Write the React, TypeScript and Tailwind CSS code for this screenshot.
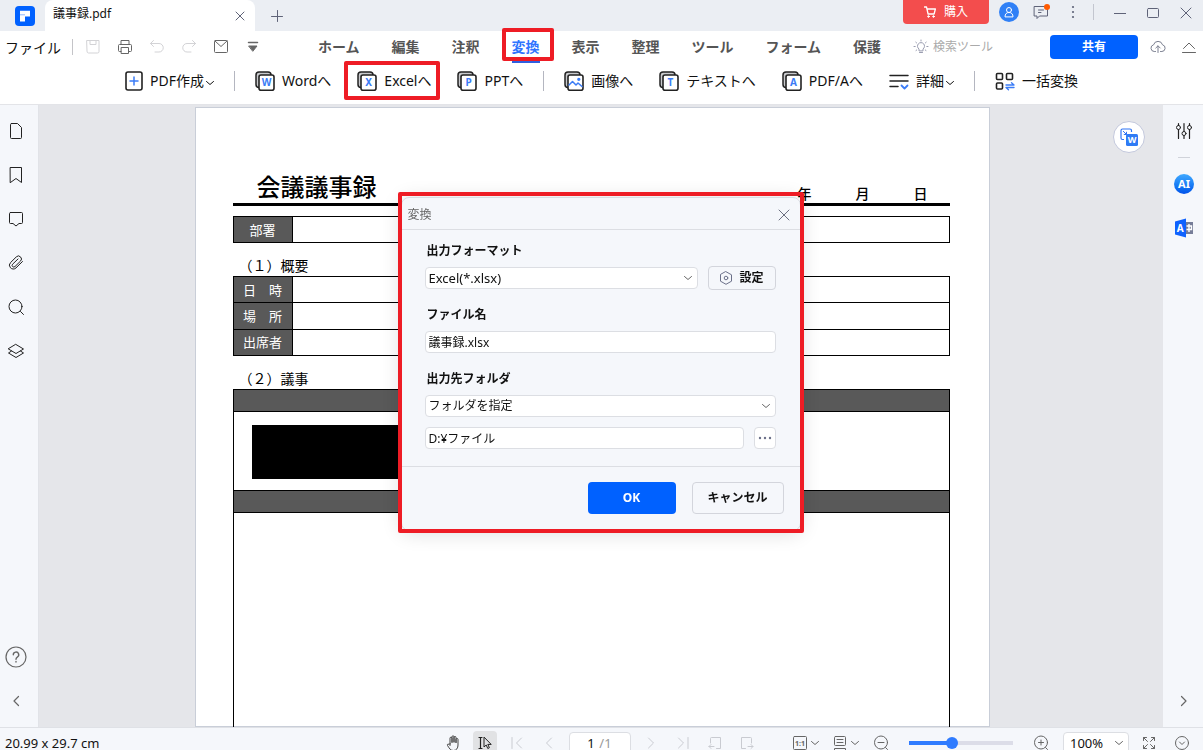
import type { ReactNode } from "react";

const fontUi = "font-['Noto_Sans','Noto_Sans_CJK_JP',sans-serif]";
const fontDoc = "font-['Noto_Sans_CJK_JP',sans-serif]";

type IconProps = {
  w?: number;
  h?: number;
  className?: string;
  children: ReactNode;
};

function Icon({ w = 16, h = 16, className = "", children }: IconProps) {
  return (
    <svg
      width={w}
      height={h}
      viewBox={`0 0 ${w} ${h}`}
      fill="none"
      stroke="currentColor"
      strokeWidth="1"
      strokeLinecap="round"
      strokeLinejoin="round"
      aria-hidden="true"
      className={`shrink-0 ${className}`}
    >
      {children}
    </svg>
  );
}

function Chevron({ className = "" }: { className?: string }) {
  return (
    <Icon w={8} h={6} className={className}>
      <path d="M.5 1.5 4 4.5 7.5 1.5" />
    </Icon>
  );
}

function CloseIcon({ size = 12 }: { size?: number }) {
  return (
    <Icon w={size} h={size}>
      <path d={`M1 1 ${size - 1} ${size - 1} M${size - 1} 1 1 ${size - 1}`} />
    </Icon>
  );
}

/* Two stacked sheets, with the target format on the front one */
function SheetIcon({ letter }: { letter?: string }) {
  return (
    <Icon w={20} h={20} className="text-[#222]">
      <rect x="1" y="1" width="15" height="15.5" rx="3" fill="#c8c9cc" strokeWidth="1.5" />
      <rect x="4" y="4" width="15" height="15.2" rx="2" fill="#fff" strokeWidth="1.6" />
      {letter ? (
        <text
          x="11.5"
          y="15.3"
          textAnchor="middle"
          fontSize="10"
          fontWeight="700"
          fontFamily="Noto Sans"
          fill="#3b7cf6"
          stroke="none"
        >
          {letter}
        </text>
      ) : (
        <g stroke="#3b7cf6" strokeWidth="1.5">
          <path d="M5 14 8.5 10.5 12 14 14 12 18 15.5" />
          <circle cx="14.8" cy="8.3" r=".9" fill="#3b7cf6" />
        </g>
      )}
    </Icon>
  );
}

function TitleBar() {
  return (
    <div className="flex h-[31px] shrink-0 bg-[#ebeef3] text-[#5f6378]">
      <div className="flex w-[45px] items-center justify-center pl-1">
        <svg width="20" height="20" viewBox="0 0 20 20" aria-hidden="true">
          <rect width="20" height="20" rx="4" fill="#0061ff" />
          <path d="M5 4.800h10v5.700h-5V15.500H5z" fill="#fff" />
          <path d="M5 8.300h5v1H5z" fill="#8fb8ff" />
        </svg>
      </div>
      <div className="flex w-[210px] items-center justify-between rounded-t-lg bg-white pr-2.5 pl-2">
        <span className="pb-1 text-[12px] text-[#111]">議事録.pdf</span>
        <button type="button" aria-label="タブを閉じる">
          <CloseIcon size={10} />
        </button>
      </div>
      <button type="button" aria-label="新しいタブ" className="px-4">
        <Icon w={12} h={12}>
          <path d="M6.500.5v11M.5 6.500h11" />
        </Icon>
      </button>
      <div className="ml-auto flex h-6 items-center pr-[11px]">
        <button
          type="button"
          className="flex h-6 w-[86px] items-center justify-center gap-2 rounded-b bg-[#f34d4d] text-[12px] text-white"
        >
          <Icon w={12} h={12}>
            <path d="M.5 1h2l1.600 7h6l1.300-5H3" strokeWidth="1.300" />
            <circle cx="4.500" cy="10.500" r=".8" fill="#fff" />
            <circle cx="9.500" cy="10.500" r=".8" fill="#fff" />
          </Icon>
          購入
        </button>
        <button
          type="button"
          aria-label="アカウント"
          className="ml-2.5 flex size-5 items-center justify-center rounded-full bg-[#3080f6] text-white"
        >
          <Icon w={12} h={12}>
            <circle cx="6" cy="4" r="2.500" />
            <path d="M2 10.500c0-2.500 1.500-4 4-4s4 1.500 4 4z" />
          </Icon>
        </button>
        <button type="button" aria-label="メッセージ" className="relative ml-3.5">
          <Icon w={16} h={16}>
            <path d="M1.500 2.500h13v9.500h-8l-2.500 2.500v-2.500h-2.500zM5.500 6h5M5.500 8.500h2.500" />
          </Icon>
          <span className="absolute top-0 -right-px size-1.5 rounded-full bg-[#ff5a00]" />
        </button>
        <button type="button" aria-label="その他" className="ml-5">
          <Icon w={8} h={14}>
            <g fill="currentColor" stroke="none">
              <circle cx="4" cy="2" r="1.100" />
              <circle cx="4" cy="7" r="1.100" />
              <circle cx="4" cy="12" r="1.100" />
            </g>
          </Icon>
        </button>
        <span className="ml-4 h-4 w-px bg-[#c3c6cf]" />
        <div className="ml-5 flex items-center gap-5 pt-0.5">
          <button type="button" aria-label="最小化">
            <Icon w={12} h={12}>
              <path d="M0 6.500h12" />
            </Icon>
          </button>
          <button type="button" aria-label="最大化">
            <Icon w={14} h={12}>
              <rect x="1.500" y="1.500" width="11" height="9" rx="1" />
            </Icon>
          </button>
          <button type="button" aria-label="閉じる">
            <CloseIcon />
          </button>
        </div>
      </div>
    </div>
  );
}

const quickTools = [
  {
    label: "保存",
    muted: true,
    icon: <path d="M2 1.500h12v11a1.500 1.500 0 0 1-1.500 1.500h-9A1.500 1.500 0 0 1 2 12.500zM5 1.500v4h6v-4" />,
  },
  {
    label: "印刷",
    icon: (
      <>
        <path d="M4 5.500v-4h8v4M4 12.500H2.500a1 1 0 0 1-1-1v-5a1 1 0 0 1 1-1h11a1 1 0 0 1 1 1v5a1 1 0 0 1-1 1H12" />
        <rect x="4.500" y="8.500" width="7" height="6" />
      </>
    ),
  },
  { label: "元に戻す", muted: true, icon: <path d="M4.500 1.500 1.500 4.500 4.500 7.500M1.500 4.500h8.500a4.200 4.200 0 0 1 0 8.500H6" /> },
  { label: "やり直し", muted: true, icon: <path d="M11.500 1.500 14.500 4.500 11.500 7.500M14.500 4.500H6a4.200 4.200 0 0 0 0 8.500h4" /> },
  {
    label: "メール",
    icon: (
      <>
        <rect x="1.500" y="1.500" width="13" height="12" rx="1" />
        <path d="M2 2 8 7.500 14 2" />
      </>
    ),
  },
  {
    label: "カスタマイズ",
    icon: (
      <>
        <path d="M3.500 3.500h9" strokeWidth="1.500" />
        <path d="M4 7h8L8 12z" fill="currentColor" />
      </>
    ),
  },
];

const menus = ["ホーム", "編集", "注釈", "変換", "表示", "整理", "ツール", "フォーム", "保護"];

function MenuBar() {
  return (
    <div className="grid h-8 grid-cols-[1fr_auto_1fr] items-center">
      <div className="flex items-center pl-[5px]">
        <button type="button" className="text-[14px] text-[#111]">ファイル</button>
        <span className="mr-1 ml-[11px] h-4 w-px bg-[#c4c4c8]" />
        {quickTools.map((t) => (
          <button
            key={t.label}
            type="button"
            aria-label={t.label}
            className={`flex w-8 justify-center ${t.muted ? "text-[#d3d3d6]" : "text-[#666]"}`}
          >
            <Icon>{t.icon}</Icon>
          </button>
        ))}
      </div>
      <nav className="flex h-8 gap-8 pr-1 text-[14px] font-bold text-[#555]">
        {menus.map((m) =>
          m === "変換" ? (
            <button key={m} type="button" className="relative pb-0.5 text-[#2f74ff]">
              {m}
              <span className="absolute inset-x-0 bottom-0 h-0.5 bg-[#2f5fe0]" />
              <span className="absolute -right-3.5 bottom-0.5 -left-2.5 -top-[3px] rounded-xs border-4 border-[#ee1c25]" />
            </button>
          ) : (
            <button key={m} type="button" className="pb-0.5">{m}</button>
          )
        )}
      </nav>
      <div className="flex items-center pr-[7px] pl-7 text-[#7b7f90]">
        <button type="button" className="flex items-center gap-1 text-[12px] text-[#aaa]">
          <Icon className="text-[#9a9db0]">
            <path d="M6 11.500v-1.500a3.500 3.500 0 1 1 4 0v1.500zM6.500 13.500h3M8 1v1M2.800 3.200l.8.7M13.200 3.200l-.8.7M1 7.500h1.200M13.800 7.500H15M3 11.500l.7-.5M13 11.500l-.7-.5" />
          </Icon>
          検索ツール
        </button>
        <button
          type="button"
          className="ml-auto h-6 w-[88px] rounded bg-[#0061ff] text-[12px] font-bold text-white"
        >
          共有
        </button>
        <button type="button" aria-label="クラウドへアップロード" className="ml-3">
          <Icon w={16} h={16}>
            <path d="M5.500 12.500H4.200a3.400 3.400 0 0 1-.6-6.700 4.600 4.600 0 0 1 8.900 0 3.400 3.400 0 0 1-.6 6.700h-1.400M8 13.500V7M5.800 9 8 6.800 10.200 9" />
          </Icon>
        </button>
        <button type="button" aria-label="リボンを折りたたむ" className="ml-4 text-[#666]">
          <Icon w={14} h={14}>
            <path d="M1.500 8.500 7 3l5.500 5.500M.5 12.500h13" />
          </Icon>
        </button>
      </div>
    </div>
  );
}

function Tool({ icon, label, menu, marked }: { icon: ReactNode; label: string; menu?: boolean; marked?: boolean }) {
  return (
    <button type="button" className="relative flex h-9 items-center px-[13px] whitespace-nowrap">
      {icon}
      <span className="ml-[7px] pb-0.5">{label}</span>
      {menu && <Chevron className="mt-1 ml-0.5" />}
      {marked && <span className="absolute -top-0.5 right-1 -bottom-px left-0 rounded-xs border-4 border-[#ee1c25]" />}
    </button>
  );
}

function ToolSeparator() {
  return <span className="mx-[7px] h-5 w-px bg-[#b4b6c0]" />;
}

function ToolBar() {
  return (
    <div className="flex h-9 items-center justify-center text-[14px] text-[#111]">
      <Tool
        menu
        label="PDF作成"
        icon={
          <Icon w={18} h={20} className="text-[#222]">
            <rect x="1" y="1" width="16" height="18" rx="2" strokeWidth="1.600" />
            <path d="M9 6v8M5 10h8" stroke="#3b7cf6" strokeWidth="1.500" />
          </Icon>
        }
      />
      <ToolSeparator />
      <Tool icon={<SheetIcon letter="W" />} label="Wordへ" />
      <Tool icon={<SheetIcon letter="X" />} label="Excelへ" marked />
      <Tool icon={<SheetIcon letter="P" />} label="PPTへ" />
      <ToolSeparator />
      <Tool icon={<SheetIcon />} label="画像へ" />
      <Tool icon={<SheetIcon letter="T" />} label="テキストへ" />
      <Tool icon={<SheetIcon letter="A" />} label="PDF/Aへ" />
      <Tool
        menu
        label="詳細"
        icon={
          <Icon w={20} h={20} className="text-[#222]">
            <path d="M1 4.500h18M1 10h18M1 15.500h8" strokeWidth="1.500" />
            <path d="M12.500 14.500 15.500 17.500 18.500 14.500" stroke="#3b7cf6" strokeWidth="1.800" />
          </Icon>
        }
      />
      <ToolSeparator />
      <Tool
        label="一括変換"
        icon={
          <Icon w={20} h={20} className="text-[#222]">
            <g strokeWidth="1.600">
              <rect x="1.500" y="2.500" width="6" height="6" rx="1" />
              <rect x="11.500" y="2.500" width="6" height="6" rx="1" />
              <rect x="1.500" y="12" width="6" height="6" rx="1" />
            </g>
            <path d="M11 14h8l-2.500-2.200M19 16.500h-8l2.500 2.200" stroke="#3b7cf6" strokeWidth="1.400" />
          </Icon>
        }
      />
    </div>
  );
}

const panels = [
  { label: "サムネイル", icon: <path d="M3.500.5h6l4 4v10a1 1 0 0 1-1 1h-9a1 1 0 0 1-1-1v-13a1 1 0 0 1 1-1z" /> },
  { label: "しおり", icon: <path d="M2.500.5h11v15L8 11.500 2.500 15.500z" /> },
  { label: "注釈", icon: <path d="M2.500 1.500h11a1 1 0 0 1 1 1v9a1 1 0 0 1-1 1H11l-3 2.500-3-2.500H2.500a1 1 0 0 1-1-1v-9a1 1 0 0 1 1-1z" /> },
  {
    label: "添付ファイル",
    icon: <path d="M14.500 7 8 13.400a3.800 3.800 0 0 1-5.600-.2 3.800 3.800 0 0 1 .2-5.200l5.700-5.600a2.900 2.900 0 0 1 4.200 0 2.900 2.900 0 0 1 0 4.200L7 12a1.600 1.600 0 0 1-2.400-2.300L10 4.500" transform="translate(0 -.5)" />,
  },
  {
    label: "検索",
    icon: (
      <>
        <circle cx="7.500" cy="7.500" r="6.500" />
        <path d="m12.500 12.500 3 3" />
      </>
    ),
  },
  {
    label: "レイヤー",
    icon: <path d="M8 1.500 15.500 6 8 10.500.5 6zM3.500 8 .5 10 8 14.500 15.500 10l-3-2" />,
  },
];

function LeftRail() {
  return (
    <aside className="flex w-[39px] shrink-0 flex-col border-r border-[#e1e3e8] bg-[#f5f7fb] py-1 text-[#222]">
      {panels.map((p) => (
        <button key={p.label} type="button" aria-label={p.label} className="flex h-11 w-8 items-center justify-center">
          <Icon>{p.icon}</Icon>
        </button>
      ))}
      <button type="button" aria-label="ヘルプ" className="mt-auto flex h-11 w-8 items-center justify-center text-[#666]">
        <Icon w={22} h={22}>
          <circle cx="11" cy="11" r="10" strokeWidth="1.200" />
          <path d="M8.300 8.800a2.700 2.700 0 1 1 4 2.300c-.9.5-1.300 1-1.300 2.200M11 15.500v.6" strokeWidth="1.400" />
        </Icon>
      </button>
      <button type="button" aria-label="パネルを開く" className="flex h-11 w-8 items-center justify-center text-[#666]">
        <Icon w={8} h={12}>
          <path d="M6.500 1.500 2 6l4.500 4.500" strokeWidth="1.200" />
        </Icon>
      </button>
    </aside>
  );
}

function RightRail() {
  return (
    <aside className="flex w-10 shrink-0 flex-col items-center bg-[#f5f7fb] py-1 pl-0.5 text-[#222]">
      <button type="button" aria-label="プロパティ" className="flex h-11 items-center">
        <Icon w={18} h={18}>
          <path d="M3.500 1.500v2M3.500 7.500v9M9 1.500v8M9 13.500v3M14.500 1.500v2M14.500 7.500v9" strokeWidth="1.200" />
          <circle cx="3.500" cy="5.500" r="2" />
          <circle cx="9" cy="11.500" r="2" />
          <circle cx="14.500" cy="5.500" r="2" />
        </Icon>
      </button>
      <span className="mt-1 mb-1 h-px w-3 bg-[#d0d3da]" />
      <button type="button" aria-label="AIアシスタント" className="flex h-11 items-center">
        <span className="flex size-5 items-center justify-center rounded-full bg-linear-to-b from-[#3fa9ff] to-[#0552ea] text-[11px] font-bold text-white">
          AI
        </span>
      </button>
      <button type="button" aria-label="翻訳" className="flex h-11 items-center">
        <svg width="20" height="20" viewBox="0 0 20 20" aria-hidden="true">
          <rect x="9" y="4" width="10" height="12" fill="#767d98" />
          <path d="M1 3.500 12 .5v19L1 16.500z" fill="#0f62fe" />
          <path d="M12.500 8h5v3.500h-5M15 6v8" fill="none" stroke="#fff" strokeWidth="1.400" />
          <text x="6.300" y="13.800" textAnchor="middle" fontSize="10" fontWeight="700" fontFamily="Noto Sans" fill="#fff">
            A
          </text>
        </svg>
      </button>
      <button type="button" aria-label="サイドバーを開く" className="mt-auto flex h-11 items-center text-[#666]">
        <Icon w={8} h={12}>
          <path d="M1.500 1.500 6 6l-4.500 4.500" strokeWidth="1.200" />
        </Icon>
      </button>
    </aside>
  );
}

function FormRow({ label }: { label: string }) {
  return (
    <tr>
      <th scope="row" className="w-[59px] border border-black bg-[#595959] p-0 text-[13px] leading-4 font-normal text-white">
        {label}
      </th>
      <td className="border border-black p-0" />
    </tr>
  );
}

function SectionTitle({ children }: { children: ReactNode }) {
  return <h2 className="flex h-[33px] items-end pb-[3px] pl-1.5 text-[14px] leading-4">{children}</h2>;
}

function MinutesPage() {
  return (
    <article
      className={`w-full max-w-[795px] border border-[#c9ced8] bg-white pt-[63px] pr-[39px] pl-[37px] text-black ${fontDoc}`}
    >
      <header className="flex justify-between border-b-3 border-black pr-[22px] pb-0.5 pl-6">
        <h1 className="text-[24px] leading-[30px] font-medium">会議議事録</h1>
        <p className="flex gap-11 self-end text-[14px] leading-4 font-medium">
          <span>年</span>
          <span>月</span>
          <span>日</span>
        </p>
      </header>
      <table className="mt-2.5 h-[27px] w-full border-collapse">
        <tbody>
          <FormRow label="部署" />
        </tbody>
      </table>
      <SectionTitle>（１）概要</SectionTitle>
      <table className="h-20 w-full border-collapse">
        <tbody>
          <FormRow label="日　時" />
          <FormRow label="場　所" />
          <FormRow label="出席者" />
        </tbody>
      </table>
      <SectionTitle>（２）議事</SectionTitle>
      <div className="border border-black">
        <div className="h-[22px] border-b border-black bg-[#595959]" />
        <div className="h-[78px] px-[18px] pt-[13px]">
          <div className="h-[54px] w-1/2 bg-black" />
        </div>
        <div className="h-[23px] border-y border-black bg-[#595959]" />
        <div className="h-[500px]" />
      </div>
    </article>
  );
}

function Workspace() {
  return (
    <main className="relative flex flex-1 justify-center overflow-hidden bg-[#e5e6ea] pt-0.5 pr-[18px]">
      <MinutesPage />
      <button
        type="button"
        aria-label="Wordに変換"
        className="absolute top-4 right-[18px] flex size-8 items-center justify-center rounded-full border border-[#c3c8dc] bg-white"
      >
        <svg width="18" height="18" viewBox="0 0 18 18" aria-hidden="true">
          <path d="M4 11.500H2.500A1.500 1.500 0 0 1 1 10V2.500A1.500 1.500 0 0 1 2.500 1H10a1.500 1.500 0 0 1 1.500 1.500V4" fill="none" stroke="#2f74f5" strokeWidth="1.200" />
          <path d="M3 3l3.500 3.500M6.500 3.800v2.700H3.800" fill="none" stroke="#2f74f5" />
          <rect x="6" y="6" width="12" height="12" rx="1.500" fill="#2f7bf5" />
          <text x="12" y="15.300" textAnchor="middle" fontSize="9" fontWeight="700" fontFamily="Noto Sans" fill="#fff">
            W
          </text>
        </svg>
      </button>
    </main>
  );
}

const field =
  "h-[22px] w-full min-w-0 appearance-none rounded border border-[#dcdee3] bg-white px-[3px] leading-4 text-[#111] outline-none";

function SelectField({ id, value, big }: { id: string; value: string; big?: boolean }) {
  return (
    <div className="relative min-w-0 flex-1">
      <select id={id} className={`${field} block ${big ? "text-[13px]" : "text-[12px]"}`}>
        <option>{value}</option>
      </select>
      <Chevron className="pointer-events-none absolute top-2 right-1.5 text-[#666]" />
    </div>
  );
}

function FieldLabel({ htmlFor, children }: { htmlFor: string; children: ReactNode }) {
  return (
    <label htmlFor={htmlFor} className="h-4 pl-0.5 leading-[18px] font-bold">
      {children}
    </label>
  );
}

function ConvertDialog() {
  return (
    <div className="fixed inset-0 flex items-center justify-center pr-0.5 pb-[22px]">
      <div
        role="dialog"
        aria-labelledby="convert-title"
        className="relative w-full max-w-[400px] rounded-lg border border-[#d9dce3] bg-[#f5f7fb] text-[12px] text-[#111] shadow-[0_2px_20px_rgba(0,0,0,0.14)]"
      >
        <div className="flex h-8 items-center justify-between border-b border-[#dcdee3] pt-0.5 pr-2.5 pl-1.5">
          <h2 id="convert-title" className="text-[#666]">変換</h2>
          <button type="button" aria-label="ダイアログを閉じる" className="text-[#6b6f80]">
            <CloseIcon />
          </button>
        </div>
        <div className="flex flex-col gap-2 pt-3 pr-6 pb-4 pl-[23px]">
          <FieldLabel htmlFor="format">出力フォーマット</FieldLabel>
          <div className="flex h-6 items-center gap-2.5">
            <SelectField id="format" value="Excel(*.xlsx)" big />
            <button
              type="button"
              className="flex h-6 w-[68px] items-center justify-center gap-1.5 rounded border border-[#d3d5dc] font-bold"
            >
              <Icon w={14} h={14} className="text-[#6b7089]">
                <path d="M7 .7 12.500 3.800v6.400L7 13.300 1.500 10.200V3.800z" />
                <circle cx="7" cy="7" r="1.800" />
              </Icon>
              設定
            </button>
          </div>
          <div className="mt-2 flex">
            <FieldLabel htmlFor="filename">ファイル名</FieldLabel>
          </div>
          <div className="flex h-6 items-center">
            <input id="filename" type="text" defaultValue="議事録.xlsx" className={field} />
          </div>
          <div className="mt-2 flex">
            <FieldLabel htmlFor="folder">出力先フォルダ</FieldLabel>
          </div>
          <div className="flex h-6 items-center">
            <SelectField id="folder" value="フォルダを指定" />
          </div>
          <div className="flex h-6 items-center gap-2.5">
            <input type="text" aria-label="フォルダのパス" defaultValue="D:¥ファイル" className={`${field} text-[12px]`} />
            <button
              type="button"
              aria-label="参照"
              className="flex h-[22px] w-[22px] shrink-0 items-center justify-center rounded border border-[#dcdee3] bg-white text-[#6b7089]"
            >
              <Icon w={14} h={4}>
                <g fill="currentColor" stroke="none">
                  <circle cx="2" cy="2" r="1.200" />
                  <circle cx="7" cy="2" r="1.200" />
                  <circle cx="12" cy="2" r="1.200" />
                </g>
              </Icon>
            </button>
          </div>
        </div>
        <div className="flex justify-end gap-4 border-t border-[#dcdee3] px-4 pt-[15px] pb-4 font-bold">
          <button type="button" className="h-8 w-[88px] rounded bg-[#0061ff] text-white">OK</button>
          <button type="button" className="h-8 w-[92px] rounded border border-[#d3d5dc]">キャンセル</button>
        </div>
        <span className="pointer-events-none absolute -inset-x-1 -top-1.5 -bottom-[3px] rounded-xs border-4 border-[#ee1c25]" />
      </div>
    </div>
  );
}

function StatusButton({ label, active, children }: { label: string; active?: boolean; children: ReactNode }) {
  return (
    <button
      type="button"
      aria-label={label}
      className={`flex size-6 items-center justify-center ${active ? "rounded bg-[#e1e2e4] text-[#222]" : ""}`}
    >
      {children}
    </button>
  );
}

function StatusBar() {
  return (
    <footer className="h-[23px] shrink-0 overflow-hidden border-t border-[#dfe1e6] bg-[#f5f7fb]">
      <div className="grid h-[29px] grid-cols-[1fr_auto_1fr] items-center text-[13px] leading-4 text-[#111]">
        <span className="pl-[5px]">20.99 x 29.7 cm</span>
        <div className="flex items-center gap-2 pr-1 text-[#c9cbd1]">
          <StatusButton label="手のひらツール">
            <Icon w={14} h={16} className="text-[#444]">
              <path d="M4 9V3.200a1 1 0 0 1 2 0V7.500M6 7V1.800a1 1 0 0 1 2 0V7M8 7V2.500a1 1 0 0 1 2 0V7.500M10 7.500V4.500a1 1 0 0 1 2 0V10c0 3-1.500 5.500-4.500 5.500S3.800 14 1.500 10.500c-.6-1 .5-2 1.500-1l1 1V8.500" />
            </Icon>
          </StatusButton>
          <StatusButton label="選択ツール" active>
            <Icon w={14} h={14}>
              <path d="M1 1.500h3M2.500 1.500v11M1 12.500h3" strokeWidth="1.200" />
              <path d="M6 1.500v9.500l2.200-2 1.600 3.500 1.600-.8-1.600-3.300h3z" />
            </Icon>
          </StatusButton>
          <StatusButton label="最初のページ">
            <Icon w={12} h={12}>
              <path d="M1 .5v11M10.500 1 5.500 6l5 5" />
            </Icon>
          </StatusButton>
          <StatusButton label="前のページ">
            <Icon w={12} h={12}>
              <path d="M8.500 1 3.500 6l5 5" />
            </Icon>
          </StatusButton>
          <label className="flex h-[22px] w-[62px] items-center justify-center rounded border border-[#dcdee3] bg-white text-[#999]">
            <input aria-label="ページ" defaultValue="1" className="h-4 w-3 bg-transparent text-[#111] outline-none" />
            /1
          </label>
          <StatusButton label="次のページ">
            <Icon w={12} h={12}>
              <path d="M3.500 1 8.500 6l-5 5" />
            </Icon>
          </StatusButton>
          <StatusButton label="最後のページ">
            <Icon w={12} h={12}>
              <path d="M1.500 1 6.500 6l-5 5M11 .5v11" />
            </Icon>
          </StatusButton>
          <StatusButton label="前の表示">
            <Icon w={14} h={14}>
              <path d="M2.500 7V2.500a1 1 0 0 1 1-1h9v11h-4M6 10.500H1M3 8.500l-2 2 2 2" />
            </Icon>
          </StatusButton>
          <StatusButton label="次の表示">
            <Icon w={14} h={14}>
              <path d="M11.500 7V2.500a1 1 0 0 0-1-1h-9v11h4M8 10.500h5M11 8.500l2 2-2 2" />
            </Icon>
          </StatusButton>
        </div>
        <div className="flex items-center justify-end pr-3.5 text-[#666]">
          <button type="button" aria-label="実際のサイズ" className="flex items-center gap-1">
            <Icon w={14} h={14}>
              <rect x=".5" y=".5" width="13" height="13" rx="1" />
              <text x="7" y="9.700" textAnchor="middle" fontSize="7" fontWeight="700" fontFamily="Noto Sans" fill="currentColor" stroke="none">
                1:1
              </text>
            </Icon>
            <Chevron />
          </button>
          <button type="button" aria-label="ページ表示" className="ml-3.5 flex items-center gap-1">
            <Icon w={14} h={14}>
              <rect x="1.500" y=".5" width="11" height="9" rx="1" />
              <path d="M4 3.500h6M4 6.500h6M1.500 14v-1.500h11V14" />
            </Icon>
            <Chevron />
          </button>
          <button type="button" aria-label="縮小" className="ml-3.5">
            <Icon w={16} h={16}>
              <circle cx="8" cy="7.500" r="6.500" />
              <path d="M5 7.500h6M12.500 12.500l2 2" />
            </Icon>
          </button>
          <input
            type="range"
            aria-label="ズーム"
            defaultValue="40"
            className="mx-5 h-1 w-26 appearance-none bg-[linear-gradient(to_right,#2f7bff_40%,#dcdde8_40%)] [&::-webkit-slider-thumb]:size-3 [&::-webkit-slider-thumb]:appearance-none [&::-webkit-slider-thumb]:rounded-full [&::-webkit-slider-thumb]:bg-[#2f7bff]"
          />
          <button type="button" aria-label="拡大">
            <Icon w={16} h={16}>
              <circle cx="8" cy="7.500" r="6.500" />
              <path d="M5.500 7.500h5M8 5v5M12.500 12.500l2 2" />
            </Icon>
          </button>
          <div className="relative ml-3.5">
            <select
              aria-label="倍率"
              className="block h-[22px] w-[66px] appearance-none rounded border border-[#dcdee3] bg-white px-1.5 leading-4 text-[#111] outline-none"
            >
              <option>100%</option>
            </select>
            <Chevron className="pointer-events-none absolute top-2 right-1.5" />
          </div>
          <button type="button" aria-label="全画面表示" className="ml-3.5">
            <Icon w={12} h={12}>
              <path d="M.5 3.500v-3h3M.5.5l4 4M8.500.5h3v3M11.500.5l-4 4M.5 8.500v3h3M.5 11.500l4-4M11.500 8.500v3h-3M11.500 11.500l-4-4" />
            </Icon>
          </button>
          <button type="button" aria-label="その他の表示" className="ml-5">
            <Icon w={14} h={14}>
              <circle cx="7" cy="7" r="6.500" />
              <path d="M4.500 6 7 8.500 9.500 6" />
            </Icon>
          </button>
        </div>
      </div>
    </footer>
  );
}

export default function App() {
  return (
    <div className={`flex h-screen flex-col overflow-hidden bg-white ${fontUi}`}>
      <TitleBar />
      <div className="shrink-0 border-b border-[#e3e4e8] pb-[5px]">
        <MenuBar />
        <ToolBar />
      </div>
      <div className="flex min-h-0 flex-1">
        <LeftRail />
        <Workspace />
        <RightRail />
      </div>
      <StatusBar />
      <ConvertDialog />
    </div>
  );
}
